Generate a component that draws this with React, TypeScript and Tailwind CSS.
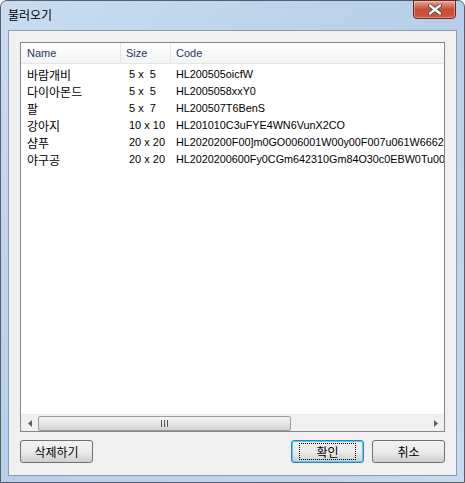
const rows = [
  { name: '바람개비', size: '5 x  5', code: 'HL200505oicfW' },
  { name: '다이아몬드', size: '5 x  5', code: 'HL2005058xxY0' },
  { name: '팔', size: '5 x  7', code: 'HL200507T6BenS' },
  { name: '강아지', size: '10 x 10', code: 'HL201010C3uFYE4WN6VunX2CO' },
  { name: '샴푸', size: '20 x 20', code: 'HL2020200F00]m0GO006001W00y00F007u061W66628' },
  { name: '야구공', size: '20 x 20', code: 'HL2020200600Fy0CGm642310Gm84O30c0EBW0Tu00[0' },
]

const ui = { fontFamily: '"Liberation Sans", "Noto Sans CJK KR", sans-serif' }
const kr = { fontFamily: '"Noto Sans CJK KR", sans-serif' }

function DlgButton({ label, focused }: { label: string; focused?: boolean }) {
  return (
    <button
      className={`w-[73px] h-[23px] rounded-[3px] border text-[12px] text-black flex items-center justify-center bg-gradient-to-b from-[#f2f2f2] via-[#ebebeb] to-[#cfcfcf] ${
        focused ? 'border-[#3c7fb1] shadow-[inset_0_0_0_1px_#48d0f8]' : 'border-[#707070]'
      }`}
      style={kr}
    >
      <span className={focused ? 'px-4 leading-[15px] outline outline-1 outline-dotted outline-black' : ''}>{label}</span>
    </button>
  )
}

export default function App() {
  return (
    <div className="w-[465px] h-[483px] bg-white">
      <div className="w-[465px] h-[483px] rounded-t-[7px] border border-[#555e6a] bg-gradient-to-br from-[#c9dcf0] via-[#b7cfe9] to-[#c6daf0] flex flex-col">
        {/* Title bar */}
        <div className="h-[29px] flex items-start justify-between pl-[7px] pr-[8px] shrink-0">
          <span className="text-[12px] mt-[5px] text-black" style={kr}>불러오기</span>
          <div className="w-[43px] h-[19px] -mt-px rounded-b-[4px] border border-[#6b2820] bg-gradient-to-b from-[#e8a493] via-[#c84c35] to-[#d5533a] flex items-center justify-center shadow-[inset_0_0_0_1px_rgba(255,255,255,0.35)]">
            <svg width="14" height="11" viewBox="0 0 14 11">
              <path d="M2 1.5 L12 9.5 M12 1.5 L2 9.5" stroke="#3a3a3a" strokeWidth="4" strokeLinecap="round" />
              <path d="M2 1.5 L12 9.5 M12 1.5 L2 9.5" stroke="#ffffff" strokeWidth="2.4" strokeLinecap="round" />
            </svg>
          </div>
        </div>

        {/* Client area */}
        <div className="flex-1 mx-[7px] mb-[6px] border border-[#8e9cb0] bg-[#f0f0f0] flex flex-col px-[11px] pt-[11px] pb-[12px]" style={ui}>
          <div className="flex-1 border border-[#828790] bg-white flex flex-col overflow-hidden">
            {/* header */}
            <div className="h-[21px] flex text-[11px] text-[#1e395b] bg-gradient-to-b from-white to-[#f3f4f6] border-b border-[#e5e5e5] shrink-0">
              <div className="w-[100px] pl-[6px] flex items-center border-r border-[#e3e6ea]">Name</div>
              <div className="w-[50px] pl-[5px] flex items-center border-r border-[#e3e6ea]">Size</div>
              <div className="flex-1 pl-[5px] flex items-center">Code</div>
            </div>
            <div className="flex-1 pt-[2px]">
              {rows.map((r) => (
                <div key={r.name} className="h-[17px] flex items-center text-black whitespace-nowrap">
                  <div className="w-[100px] pl-[6px] text-[12px] leading-[16px]" style={kr}>{r.name}</div>
                  <div className="w-[50px] pl-[8px] text-[11px] whitespace-pre">{r.size}</div>
                  <div className="flex-1 min-w-0 pl-[5px] text-[10.8px] overflow-hidden">{r.code}</div>
                </div>
              ))}
            </div>
            {/* horizontal scrollbar */}
            <div className="h-[17px] flex items-center bg-[#f0f0f0] border-t border-[#e8e8e8] shrink-0">
              <div className="w-[17px] h-full flex items-center justify-center">
                <svg width="4" height="7" viewBox="0 0 4 7"><path d="M4 0 L0 3.5 L4 7 Z" fill="#606060" /></svg>
              </div>
              <div className="w-[253px] h-[15px] rounded-[2px] border border-[#9c9c9c] bg-gradient-to-b from-[#f4f4f4] via-[#e6e6e6] to-[#d2d2d2] flex items-center justify-center">
                <svg width="7" height="7" viewBox="0 0 7 7">
                  <path d="M0.5 0 V7 M3.5 0 V7 M6.5 0 V7" stroke="#555" strokeWidth="1" />
                </svg>
              </div>
              <div className="flex-1" />
              <div className="w-[17px] h-full flex items-center justify-center">
                <svg width="4" height="7" viewBox="0 0 4 7"><path d="M0 0 L4 3.5 L0 7 Z" fill="#606060" /></svg>
              </div>
            </div>
          </div>

          <div className="flex items-center mt-[8px] shrink-0">
            <DlgButton label="삭제하기" />
            <div className="flex-1" />
            <DlgButton label="확인" focused />
            <div className="w-[8px]" />
            <DlgButton label="취소" />
          </div>
        </div>
      </div>
    </div>
  )
}
